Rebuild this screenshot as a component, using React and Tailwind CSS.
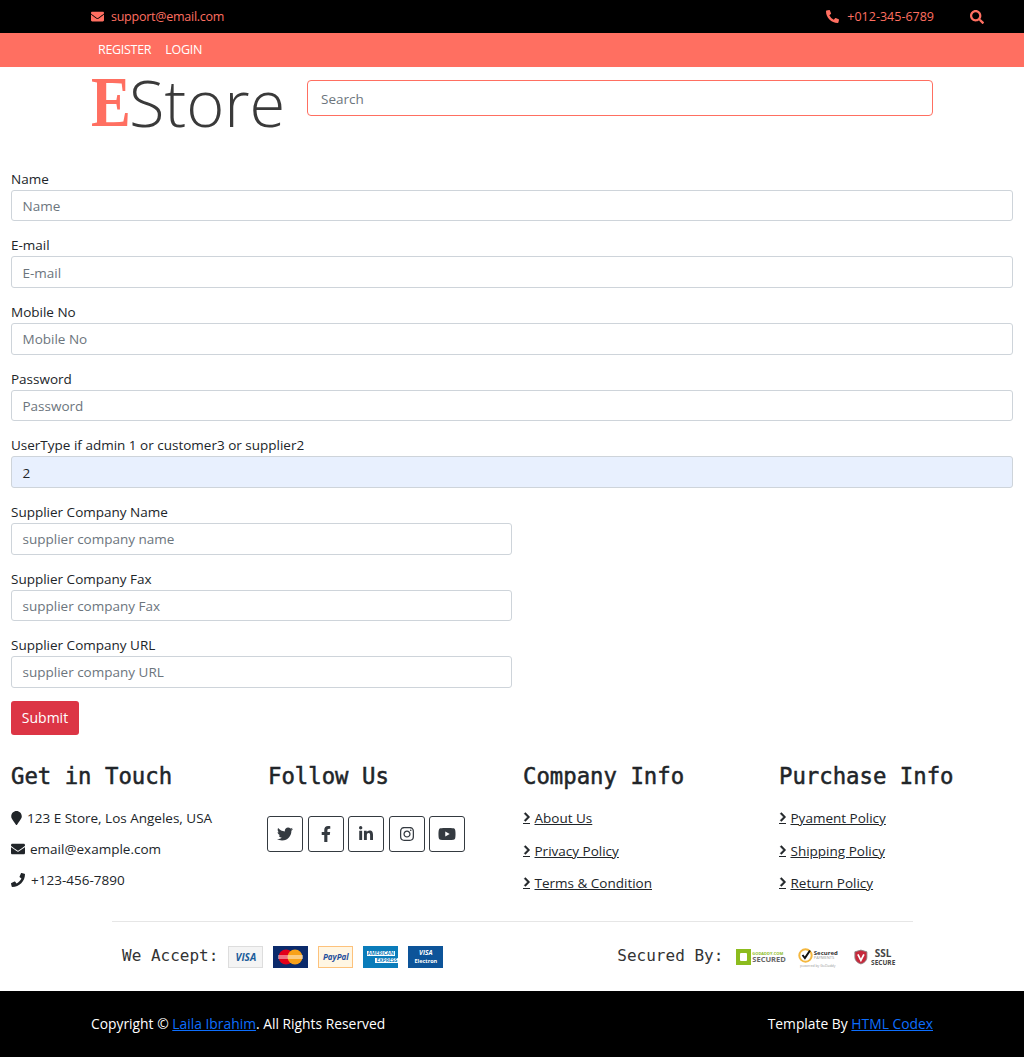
import React from "react";
import {
  FaEnvelope,
  FaPhoneAlt,
  FaSearch,
  FaMapMarker,
  FaPhone,
  FaTwitter,
  FaFacebookF,
  FaLinkedinIn,
  FaInstagram,
  FaYoutube,
  FaChevronRight,
} from "react-icons/fa";

const Field = ({ label, placeholder, value, half }) => (
  <div className={`mb-[14px] ${half ? "w-[501px]" : "w-full"}`}>
    <label className="block h-[21px] leading-[20px] text-[13.5px] text-[#212529]">{label}</label>
    <div
      className={`h-[31.67px] rounded-[3px] border border-[#ced4da] px-[10.5px] pt-[1px] flex items-center text-[13.5px] ${
        value ? "bg-[#e8f0fe] text-[#212529]" : "bg-white text-[#6c757d]"
      }`}
    >
      {value || placeholder}
    </div>
  </div>
);

const FooterLink = ({ text }) => (
  <a href="#" className="flex items-start text-[13.5px] text-[#212529] h-[20.5px]">
    <span className="w-[7px] h-[16px] pt-[3px] border-b border-[#212529] flex items-center justify-center overflow-visible">
      <FaChevronRight className="text-[10px] shrink-0" stroke="currentColor" strokeWidth={30} />
    </span>
    <span className="pl-[4.5px] underline leading-[20px]">{text}</span>
  </a>
);

const Social = ({ children }) => (
  <a
    href="#"
    className="w-[36px] h-[36px] flex items-center justify-center rounded-[3px] border border-[#343a40] text-[#343a40] text-[16px]"
  >
    {children}
  </a>
);

const Card = ({ className, children }) => (
  <div className={`w-[35px] h-[22px] flex flex-col items-center justify-center overflow-hidden font-bold leading-none ${className}`}>
    {children}
  </div>
);

const headingCls = "font-['DejaVu_Sans_Mono',monospace] font-normal [-webkit-text-stroke:0.5px_#212529] text-[22.3px] leading-[27px] text-[#212529]";
const monoCls = "font-['DejaVu_Sans_Mono',monospace] text-[16px] leading-[20px] text-[#333]";

export default function App() {
  return (
    <div className="w-[1024px] bg-white font-['Open_Sans',sans-serif] text-[13.5px] text-[#212529]">
      {/* top bar */}
      <div className="h-[33px] bg-black text-[#ff6f61] text-[12.5px] pl-[91px] pr-[40px] flex items-center">
        <FaEnvelope className="text-[13px] mr-[7px]" />
        <span className="tracking-[-0.25px] pt-[1px]">support@email.com</span>
        <FaPhoneAlt className="text-[13px] ml-auto mr-[8px]" />
        <span className="pt-[1px]">+012-345-6789</span>
        <FaSearch className="text-[14px] ml-[36px]" />
      </div>
      <div className="h-[34px] bg-[#ff6f61] text-white text-[12.5px] pl-[98px] flex items-center gap-[14px]">
        <a href="#" className="tracking-[-0.3px]">REGISTER</a>
        <a href="#" className="tracking-[-0.3px]">LOGIN</a>
      </div>

      {/* logo + search */}
      <div className="h-[101.7px] pl-[91px] flex items-start">
        <div className="w-[216px] h-[70px] flex items-center whitespace-nowrap">
          <span className="w-[38px] inline-block origin-left scale-x-[0.84] font-['Liberation_Serif',serif] font-bold text-[71px] leading-none text-[#ff6f61]">E</span>
          <span className="font-['Open_Sans',sans-serif] font-light text-[65px] leading-none text-[#3a3a3a]">Store</span>
        </div>
        <div className="mt-[13px] w-[626px] h-[36px] rounded-[4px] border border-[#ff6f61] px-[13px] pt-[2px] flex items-center text-[13.5px] text-[#6c757d]">
          Search
        </div>
      </div>

      {/* register form */}
      <form className="px-[11px]">
        <Field label="Name" placeholder="Name" />
        <Field label="E-mail" placeholder="E-mail" />
        <Field label="Mobile No" placeholder="Mobile No" />
        <Field label="Password" placeholder="Password" />
        <Field label="UserType if admin 1 or customer3 or supplier2" value="2" />
        <Field half label="Supplier Company Name" placeholder="supplier company name" />
        <Field half label="Supplier Company Fax" placeholder="supplier company Fax" />
        <Field half label="Supplier Company URL" placeholder="supplier company URL" />
        <button type="button" className="-mt-[0.7px] w-[68px] h-[34px] pb-[1px] rounded-[3px] bg-[#dc3545] text-white text-[14px]">
          Submit
        </button>
      </form>

      {/* footer columns */}
      <div className="mt-[28px] grid grid-cols-4 h-[158px]">
        <div className="pl-[11px]">
          <h2 className={headingCls}>Get in Touch</h2>
          <div className="mt-[18px] flex flex-col gap-[11px]">
            <p className="flex items-center h-[20px]"><FaMapMarker className="w-[11px] h-[14px] mr-[5px]" />123 E Store, Los Angeles, USA</p>
            <p className="flex items-center h-[20px]"><FaEnvelope className="text-[14px] mr-[5px]" />email@example.com</p>
            <p className="flex items-center h-[20px]"><FaPhone className="text-[14px] mr-[6px]" />+123-456-7890</p>
          </div>
        </div>
        <div className="pl-[12px]">
          <h2 className={headingCls}>Follow Us</h2>
          <div className="mt-[26px] -ml-[1px] flex gap-[4.5px]">
            <Social><FaTwitter /></Social>
            <Social><FaFacebookF /></Social>
            <Social><FaLinkedinIn /></Social>
            <Social><FaInstagram /></Social>
            <Social><FaYoutube className="text-[18px]" /></Social>
          </div>
        </div>
        <div className="pl-[11px]">
          <h2 className={headingCls}>Company Info</h2>
          <div className="mt-[18px] flex flex-col gap-[12px]">
            <FooterLink text="About Us" />
            <FooterLink text="Privacy Policy" />
            <FooterLink text="Terms & Condition" />
          </div>
        </div>
        <div className="pl-[11px]">
          <h2 className={headingCls}>Purchase Info</h2>
          <div className="mt-[18px] flex flex-col gap-[12px]">
            <FooterLink text="Pyament Policy" />
            <FooterLink text="Shipping Policy" />
            <FooterLink text="Return Policy" />
          </div>
        </div>
      </div>

      {/* payment + security */}
      <div className="mx-[112px] w-[801px] h-[70px] border-t border-[#e6e6e6] pl-[10px] pt-[24px] flex items-start">
        <span className={`${monoCls} mr-[10px]`}>We Accept:</span>
        <div className="flex gap-[10px]">
          <Card className="bg-[#f4f4f4] border border-[#ddd] text-[#1a5c9a] text-[10px] italic">VISA</Card>
          <Card className="bg-[#0b2a6b] relative">
            <svg width="27" height="16" viewBox="0 0 27 16">
              <circle cx="9" cy="8" r="7.5" fill="#e2001a" />
              <circle cx="18" cy="8" r="7.5" fill="#f7a11a" />
              <rect x="1" y="6" width="25" height="4" fill="#ffffff" fillOpacity="0.45" />
            </svg>
          </Card>
          <Card className="bg-[#fff6e3] border border-[#fdc27c] text-[#1f4f9c] text-[8px] italic">PayPal</Card>
          <Card className="bg-[#0a7cba] text-[#0a7cba] text-[5px] gap-[2px]">
            <span className="bg-white px-[1px]">AMERICAN</span>
            <span className="bg-white px-[1px] self-end">EXPRESS</span>
          </Card>
          <Card className="bg-[#0d5499] text-white text-[5.5px] gap-[3px]">
            <span className="text-[6.5px] italic">VISA</span>
            <span>Electron</span>
          </Card>
        </div>
        <span className={`${monoCls} ml-[174px]`}>Secured By:</span>
        <div className="ml-[13px] flex items-center gap-[11px] h-[22px]">
          <div className="w-[50px] flex items-center">
            <div className="w-[15px] h-[16px] bg-[#8cbc1e] flex items-center justify-center">
              <div className="w-[7px] h-[8px] bg-white rounded-[1px]" />
            </div>
            <div className="ml-[1px] leading-none">
              <div className="text-[4px] font-bold text-[#8cbc1e]">GODADDY.COM</div>
              <div className="text-[7.5px] font-bold text-[#666]">SECURED</div>
            </div>
          </div>
          <div className="w-[41px] flex flex-col items-center leading-none">
            <div className="flex items-center">
              <svg width="15" height="15" viewBox="0 0 15 15">
                <circle cx="7.5" cy="7.5" r="6.2" fill="none" stroke="#f4b73f" strokeWidth="2" />
                <path d="M4.5 7l2.4 3L12 2.5" fill="none" stroke="#111" strokeWidth="2" />
              </svg>
              <div className="ml-[1px] text-[6px] font-bold text-[#333]">
                Secured
                <div className="text-[4px] font-normal text-[#999]">PAYMENTS</div>
              </div>
            </div>
            <div className="text-[3.5px] mt-[1px] text-[#999]">powered by GoDaddy</div>
          </div>
          <div className="ml-[5px] w-[41px] flex items-center">
            <svg width="16" height="18" viewBox="0 0 16 18">
              <path d="M8 1L15 3v6c0 4-3 7-7 8-4-1-7-4-7-8V3z" fill="#c7293c" stroke="#888" />
              <path d="M4.5 6l3.5 7 3.5-7" fill="none" stroke="#fff" strokeWidth="2" />
            </svg>
            <div className="ml-[3px] text-center font-bold text-[#444]">
              <div className="text-[10px] leading-[11px]">SSL</div>
              <div className="text-[6.5px] leading-[8px]">SECURE</div>
            </div>
          </div>
        </div>
      </div>

      {/* copyright */}
      <div className="h-[66px] bg-black text-white text-[13.85px] font-medium pl-[91px] pr-[91px] flex items-center justify-between">
        <p>
          Copyright © <a href="#" className="underline text-[#0d6efd]">Laila Ibrahim</a>. All Rights Reserved
        </p>
        <p>
          Template By <a href="#" className="underline text-[#0d6efd]">HTML Codex</a>
        </p>
      </div>
    </div>
  );
}
